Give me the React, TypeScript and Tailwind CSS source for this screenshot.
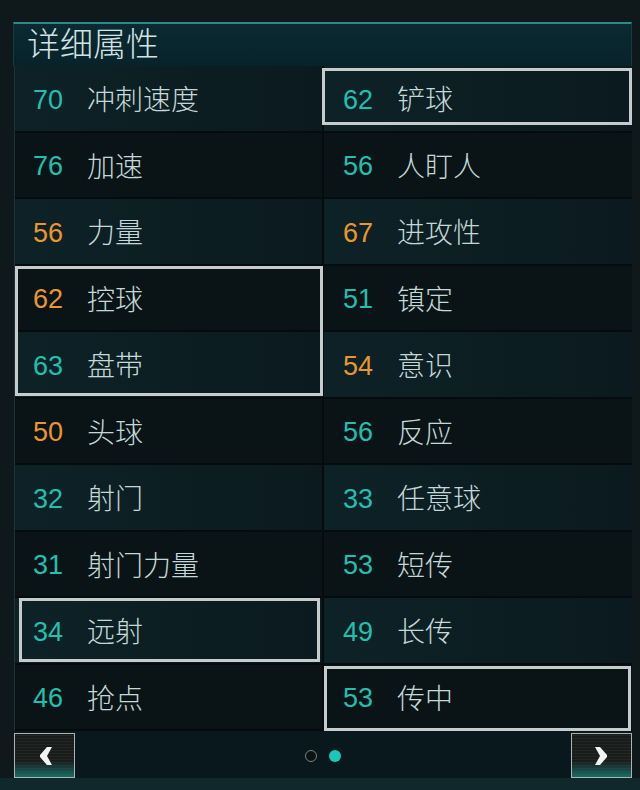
import React from 'react';

type Attr = { value: number; name: string; hot?: boolean };

const left: Attr[] = [
  { value: 70, name: '冲刺速度' },
  { value: 76, name: '加速' },
  { value: 56, name: '力量', hot: true },
  { value: 62, name: '控球', hot: true },
  { value: 63, name: '盘带' },
  { value: 50, name: '头球', hot: true },
  { value: 32, name: '射门' },
  { value: 31, name: '射门力量' },
  { value: 34, name: '远射' },
  { value: 46, name: '抢点' },
];

const right: Attr[] = [
  { value: 62, name: '铲球' },
  { value: 56, name: '人盯人' },
  { value: 67, name: '进攻性', hot: true },
  { value: 51, name: '镇定' },
  { value: 54, name: '意识', hot: true },
  { value: 56, name: '反应' },
  { value: 33, name: '任意球' },
  { value: 53, name: '短传' },
  { value: 49, name: '长传' },
  { value: 53, name: '传中' },
];

const Cell: React.FC<{ attr: Attr; index: number; side: 'l' | 'r' }> = ({ attr, index, side }) => {
  const odd = index % 2 === 0;
  return (
    <div
      className={`flex items-center border-b-2 border-[#060c0e] ${
        side === 'l' ? 'border-r-2 pl-[16px]' : 'pl-[17px]'
      } ${odd ? 'bg-gradient-to-r from-[#0d2227] to-[#0b1a1e]' : 'bg-[#0a1417]'}`}
    >
      <span
        className={`w-[34px] pt-[3px] text-center text-[27px] ${attr.hot ? 'text-[#e9962f]' : 'text-[#22bfb0]'}`}
        style={{ fontFamily: '"Liberation Sans", sans-serif' }}
      >
        {attr.value}
      </span>
      <span className="ml-[22px] text-[28px] text-[#c5d8d8] font-light">{attr.name}</span>
    </div>
  );
};

const Arrow: React.FC<{ dir: 'l' | 'r' }> = ({ dir }) => (
  <button className="w-[61px] h-[45px] border-[1.5px] border-[#a9b3b3] bg-[repeating-linear-gradient(0deg,#1a1c1c_0px,#1a1c1c_2px,#232626_2px,#232626_3px)] relative overflow-hidden flex items-center justify-center">
    <span className="absolute left-0 right-0 bottom-0 h-[16px] bg-gradient-to-t from-[#1a6b66] to-transparent" />
    <svg width="16" height="20" viewBox="0 0 16 20" className="relative">
      {dir === 'l' ? (
        <polygon points="10,1 15,1 10,10 15,19 10,19 3,11 3,9" fill="#f2f4f4" />
      ) : (
        <polygon points="6,1 1,1 6,10 1,19 6,19 13,11 13,9" fill="#f2f4f4" />
      )}
    </svg>
  </button>
);

export default function App() {
  return (
    <div
      className="w-[640px] h-[790px] bg-[#0f181b] pt-[22px] pl-[13px] pr-[8px] flex flex-col"
      style={{ fontFamily: '"Noto Sans CJK SC", "Noto Sans", sans-serif' }}
    >
      <div className="h-[44px] border-t-2 border-x border-[#2a8b87] border-x-[#173c3e] bg-gradient-to-b from-[#0b2a31] to-[#08222a] flex items-center pl-[13px] pb-[5px]">
        <span className="text-[33px] leading-none text-[#d3e3e3] font-light">详细属性</span>
      </div>
      <div className="relative grid grid-cols-[309px_308px] grid-rows-[repeat(10,66.5px)] grid-flow-col border-l border-[#1b3236] ml-[1px]">
        {left.map((a, i) => (
          <Cell key={'l' + i} attr={a} index={i} side="l" />
        ))}
        {right.map((a, i) => (
          <Cell key={'r' + i} attr={a} index={i} side="r" />
        ))}
        <div className="absolute left-[307px] top-[2px] w-[310px] h-[57px] border-[3px] border-[#c6cccc]" />
        <div className="absolute left-0 top-[200px] w-[308px] h-[130px] border-[3px] border-[#c6cccc]" />
        <div className="absolute left-[4px] top-[532px] w-[301px] h-[64px] border-[3px] border-[#c6cccc]" />
        <div className="absolute left-[309px] top-[600px] w-[307px] h-[65px] border-[3px] border-[#c6cccc]" />
      </div>
      <div className="h-[47px] bg-[#09181c] flex items-center justify-between pt-[2px] ml-[1px]">
        <Arrow dir="l" />
        <div className="flex items-center gap-[12px]">
          <span className="w-[12px] h-[12px] rounded-full border-[1.5px] border-[#7a8282] bg-[#0a1214]" />
          <span className="w-[12px] h-[12px] rounded-full bg-[#19c8b8]" />
        </div>
        <Arrow dir="r" />
      </div>
      <div className="flex-1 -ml-[13px] -mr-[8px] bg-[#10282c]" />
    </div>
  );
}
